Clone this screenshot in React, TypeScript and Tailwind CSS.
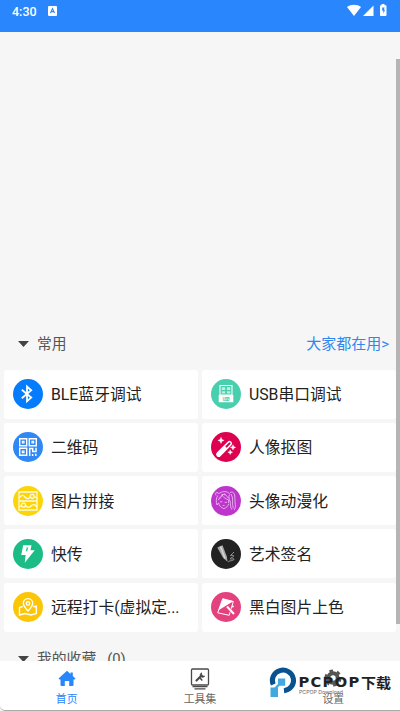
import React from 'react';

interface Tool {
  name: string;
  color: string;
  icon: React.ReactNode;
}

const stroke = { fill: 'none', stroke: 'white', strokeWidth: 1.2 };

const BluetoothIcon = () => (
  <svg viewBox="0 0 30 30" className="size-[30px]" {...stroke} strokeWidth={1.8}>
    <path d="M8.8 10.700 18.200 18.600 14 22.200V7.500l4.200 3.700L8.800 19.300" />
  </svg>
);

const UsbIcon = () => (
  <svg viewBox="0 0 30 30" className="size-[30px]">
    <path d="M9 6.500h12v9.500H9z" {...stroke} strokeWidth={1.1} />
    <path d="M10.800 8.300h3.400v2.700h-3.400zM15.900 8.300h3.400v2.700h-3.400zM10.800 12.300h3.400v2.200h-3.400zM15.900 12.300h3.400v2.200h-3.400z" fill="white" opacity=".65" />
    <path d="M7.700 16h14.600v7.300H7.700z" fill="white" />
    <text x="11.500" y="21.600" fontSize="4.500" fontWeight="700" fill="#48cfad" textLength="7" className="font-['Roboto',sans-serif]">USB</text>
  </svg>
);

const QrIcon = () => (
  <svg viewBox="0 0 30 30" className="size-[30px]" {...stroke} strokeWidth={1.4}>
    <path d="M6.700 6.700h7v7h-7zM16.300 6.700h7v7h-7zM6.700 16.300h7v7h-7z" />
    <path d="M9.400 9.400h1.600v1.600H9.400zM19 9.400h1.600v1.600H19zM9.400 19h1.600v1.600H9.400z" strokeWidth={1.2} />
    <path d="M16.700 24v-7.400h3v3h3.300v-3.800M19.600 22v2M22.800 21.800V24" strokeWidth={1.5} />
  </svg>
);

const WandIcon = () => (
  <svg viewBox="0 0 30 30" className="size-[30px]">
    <path d="M7.700 22.300 18.500 11.500" stroke="white" strokeWidth="5.200" strokeLinecap="round" />
    <path d="M15.500 14.500 18.600 11.400" stroke="#de0050" strokeWidth="2" strokeLinecap="round" />
    <path d="m10 5.300.9 2.200 2.200.9-2.200.9-.9 2.200-.9-2.200-2.200-.9 2.200-.9zM22 12.700l.8 1.900 1.900.8-1.900.8-.8 1.900-.8-1.900-1.900-.8 1.900-.8zM19.200 17.800l.7 1.700 1.700.7-1.700.7-.7 1.700-.7-1.700-1.700-.7 1.700-.7z" fill="white" stroke="white" strokeWidth=".4" />
  </svg>
);

const CollageIcon = () => (
  <svg viewBox="0 0 30 30" className="size-[30px]" {...stroke} stroke="#fffbe0" strokeWidth={1.3}>
    <path d="M6 6h18v18H6zM6 15h18" />
    <path d="M6 12.200c2.500-3.500 4-3.700 6-1.200s3.500 2 5.200-.1M24 21.200c-2-3.200-4-3.300-6-1.200s-4 1.500-5.300-.7" />
    <circle cx="19.200" cy="10.300" r="2" />
    <circle cx="10.500" cy="19.200" r="2" />
    <path d="M21.200 10.500 24 12M8.500 19.500 6 21" />
  </svg>
);

const AnimeIcon = () => (
  <svg viewBox="0 0 30 30" className="size-[30px]" {...stroke} stroke="#f0c8f5" strokeWidth={0.8}>
    <path d="M5 9.500c-.7-1.200-.3-2.700.8-3.500.5 1.400 1.700 1.700 3.200 1 2.800-2 6.800-2 9.300.5" />
    <path d="M6.800 9.500c-2 3-1.800 6.500-.8 9.500l1.500-2.200c.5 2.500 2.200 4.700 5.300 5.800 2.500-.8 4.200-2.300 4.900-4.800" />
    <path d="M7 14c2.200-1.500 3.300-2.800 4-5.500 1 2.800 3 4 6.700 5.500l-.2 3M11 8.500c2.500-.5 5.200 1 6.500 3.800" />
    <path d="M18.300 7.500c1.800-2.500 4.700-1.500 5.300 1.500.6 4 .1 6 .8 9.500.2 2-.3 4-1.200 5.500" />
    <path d="M18.500 8.500c-1.300 2.500-.2 4.500.5 6.500.6 2.500.2 6 1.700 8.500M20 8c2.700 4 .8 8 2.200 14.500" />
    <path d="M9 15.800h2.300M13.700 16.300H16M11.800 19.500h1.700M9.700 10.500 8 12.700M13 7.200l1.500 1.700" />
  </svg>
);

const BoltIcon = () => (
  <svg viewBox="0 0 30 30" className="size-[30px]">
    <path d="M10.200 6.300h8.300l-1 5h4.200L11.800 23.800l.8-7.800H8.200z" fill="white" />
    <path d="m13.900 8-1.100 4.300h1.300l.9-3.300z" fill="#1bbc86" />
  </svg>
);

const MapPinIcon = () => (
  <svg viewBox="0 0 30 30" className="size-[30px]" {...stroke} strokeWidth={1.4}>
    <path d="M15 19c-3.200-3.400-4.700-5.600-4.700-7.700a4.700 4.700 0 0 1 9.400 0C19.700 13.400 18.200 15.600 15 19z" />
    <circle cx="15" cy="11.400" r="1.700" />
    <path d="M9.700 14.500 6.500 15.500V23l5.500-1.500L18 23l5.300-1.500v-7.300l-3 .5" />
  </svg>
);

const PencilIcon = () => (
  <svg viewBox="0 0 30 30" className="size-[30px]">
    <path d="m6.300 8.500 5.200-2.300L15.800 17.500l.8 5.200-4.400-3.700z" fill="#a8a8a8" />
    <path d="m9.500 7.500 4.500 12" stroke="#d5d5d5" strokeWidth="1.500" />
    <path d="M23 13c-1.500 1-2 2.500-3.500 3.500 2-.2 3.300-.5 3 .8-.5 1.500-3 .9-3.300 2.500 1.500.8 3-.8 4 .5-1.700 1.800-4 1-6 2.500" fill="none" stroke="#999" strokeWidth="1" />
  </svg>
);

const PaintIcon = () => (
  <svg viewBox="0 0 30 30" className="size-[30px]">
    <path d="M11.700 6.800 22.300 9.500 18.200 23.300 6.700 20.800z" fill="none" stroke="white" strokeWidth="1" />
    <path d="M12 6.500 22.300 9.300 7.500 18.300z" fill="white" />
    <path d="m14.600 14.800 3.500-2.400 1.400 3.300 3.600 4.700-1.900 1.600-4.500-4.300z" fill="#e4417f" />
    <path d="m16 14.500 7 7.500" stroke="white" strokeWidth="2" />
    <circle cx="21.800" cy="14.500" r="1" fill="white" />
  </svg>
);

const tools: Tool[] = [
  { name: 'BLE蓝牙调试', color: 'bg-[#047cfb]', icon: <BluetoothIcon /> },
  { name: 'USB串口调试', color: 'bg-[#48cfad]', icon: <UsbIcon /> },
  { name: '二维码', color: 'bg-[#3088f5]', icon: <QrIcon /> },
  { name: '人像抠图', color: 'bg-[#de0050]', icon: <WandIcon /> },
  { name: '图片拼接', color: 'bg-[#fbd50a]', icon: <CollageIcon /> },
  { name: '头像动漫化', color: 'bg-[#bd35cb]', icon: <AnimeIcon /> },
  { name: '快传', color: 'bg-[#1bbc86]', icon: <BoltIcon /> },
  { name: '艺术签名', color: 'bg-[#222222]', icon: <PencilIcon /> },
  { name: '远程打卡(虚拟定...', color: 'bg-[#fcc505]', icon: <MapPinIcon /> },
  { name: '黑白图片上色', color: 'bg-[#e4417f]', icon: <PaintIcon /> },
];

const StatusBar: React.FC = () => (
  <header className="flex h-8 shrink-0 items-start bg-[#2a86fd] pl-[12px] pr-[13px] text-white">
    <span className="mt-[4px] text-[12.500px] leading-4 font-medium font-['Roboto',sans-serif]">4:30</span>
    <svg viewBox="0 0 9 10" className="ml-[11px] mt-[6px] h-[10px] w-[9px]">
      <rect width="9" height="10" rx="1" fill="white" />
      <path d="M2.500 7 4.500 2.500 6.500 7M3 5.600h3" fill="none" stroke="#2a86fd" strokeWidth="1.100" />
    </svg>
    <svg viewBox="0 0 40 12" className="ml-auto mt-[4px] h-3 w-10" fill="white">
      <path d="M0 3C4 .1 10 .1 14 3L7 12z" />
      <path d="M26.500 1.500V12H16z" />
      <path d="M34.500 1.200V0h3v1.200h1.300q.7 0 .7.800v9q0 1-.7 1h-5.100q-.7 0-.7-1V2q0-.8.7-.8z" />
      <path d="M37.500 3.500h-2.300v3.200h1.200v3.100l1.600-4h-1z" fill="#2a86fd" />
    </svg>
  </header>
);

const ToolCard: React.FC<{ tool: Tool }> = ({ tool }) => (
  <div className="flex h-[49px] min-w-0 items-center rounded-[3px] bg-white pl-[9px] pr-2">
    <div className={`size-[30px] shrink-0 overflow-hidden rounded-full ${tool.color}`}>{tool.icon}</div>
    <span className="ml-2 pt-[2px] text-[15.800px] leading-6 whitespace-nowrap text-[#222]">{tool.name}</span>
  </div>
);

const Caret = () => (
  <svg viewBox="0 0 11 6" className="h-[6px] w-[11px]">
    <path d="M0 0h11L5.500 6z" fill="#444" />
  </svg>
);

const Watermark: React.FC = () => (
  <svg viewBox="0 0 130 36" className="absolute left-[266px] top-[4px] h-9 w-[130px]">
    <path d="M7.200 19.500a10.600 10.300 0 1 1 10.800 6.200" fill="none" stroke="#07528f" strokeWidth="5" />
    <path d="M12 13.500h7.200v7.200H12zM4.500 22.500h7.500v9.500H4.500z" fill="#41a9df" />
    <path d="m12.500 20-4.500 5" stroke="#41a9df" strokeWidth="2.500" />
    <g fill="#222">
      <text x="32.500" y="22.200" fontSize="13.500" fontWeight="700" letterSpacing="1.200" textLength="62" lengthAdjust="spacingAndGlyphs" className="font-['DejaVu_Sans',sans-serif]">PCPOP</text>
      <text x="95" y="22.800" fontSize="13.500" fontWeight="700" textLength="30" lengthAdjust="spacingAndGlyphs" className="font-['Noto_Sans_CJK_SC',sans-serif]">下载</text>
    </g>
    <text x="33" y="28.800" fontSize="4.800" fill="#666" textLength="44" lengthAdjust="spacingAndGlyphs" className="font-['Inter',sans-serif]">PCPOP Download</text>
  </svg>
);

const BottomNav: React.FC = () => (
  <nav className="relative grid h-[50px] shrink-0 grid-cols-3 rounded-bl-[5px] border-b border-[#aaa] bg-white text-[10.800px] leading-[14px] text-[#666]">
    <div className="flex flex-col items-center text-[#2a86fd]">
      <svg viewBox="0 0 18 17" className="mt-[9px] h-[17px] w-[18px]" fill="currentColor">
        <path d="m9 .8 3.500 3.100V2.600h2.300v3.300L17.500 8.500 16.500 9.500h-1v5.500q0 1-1 1h-3.300v-5H6.800v5H3.500q-1 0-1-1V9.500h-1L.5 8.500z" />
      </svg>
      <span className="mt-[6px]">首页</span>
    </div>
    <div className="flex flex-col items-center">
      <svg viewBox="0 0 20 22" className="mt-[7px] h-[22px] w-5" fill="none" stroke="#4a4a4a">
        <rect x="1.500" y="1" width="17" height="16" rx="1" strokeWidth="1.300" />
        <path d="M2.500 18.700h15M4.500 20.800h11" strokeWidth="1.300" />
        <path d="m6.500 12.500 5-5" strokeWidth="2.200" strokeLinecap="round" />
        <path d="M11.500 4.800c-1.500 1-1.600 2.600-.5 3.800 1.200 1.200 2.900.8 3.700-.6l-1.900.1-1.200-1.300z" strokeWidth=".8" fill="#4a4a4a" />
        <path d="m9.500 9.500 2.800 3" strokeWidth="1.500" />
      </svg>
      <span className="mt-[3px]">工具集</span>
    </div>
    <div className="flex flex-col items-center">
      <svg viewBox="0 0 18 18" className="mt-[8px] size-[18px]" fill="none" stroke="#555">
        <circle cx="9" cy="9" r="4.700" strokeWidth="4" />
        <circle cx="9" cy="9" r="7.400" strokeWidth="2.400" strokeDasharray="3.700 4.050" />
      </svg>
      <span className="mt-[6px]">设置</span>
    </div>
    <Watermark />
  </nav>
);

export default function App() {
  return (
    <div className="flex h-[711px] w-[400px] flex-col overflow-hidden bg-[#f6f6f6] font-['Roboto','Noto_Sans_CJK_SC',sans-serif]">
      <StatusBar />
      <div className="flex min-h-0 flex-1">
        <main className="flex w-[396px] shrink-0 flex-col overflow-hidden pl-1 pt-[300px]">
          <div className="flex h-6 shrink-0 items-center pl-[14px] pr-[7px] text-[14.800px]">
            <Caret />
            <span className="ml-2 text-[#555]">常用</span>
            <span className="ml-auto text-[15px] text-[#2f87ee]">大家都在用&gt;</span>
          </div>
          <div className="mt-[13.500px] grid shrink-0 grid-cols-2 gap-x-1 gap-y-[4.300px]">
            {tools.map((tool) => (
              <ToolCard key={tool.name} tool={tool} />
            ))}
          </div>
          <div className="mt-[15px] flex h-6 shrink-0 items-center pl-[14px] text-[14.800px] text-[#555]">
            <Caret />
            <span className="ml-2">我的收藏</span>
            <span className="ml-[11px]">(0)</span>
          </div>
        </main>
        {/* scrollbar */}
        <div className="w-1 pt-[27px]">
          <div className="h-[565px] bg-[#b5b5b5]" />
        </div>
      </div>
      <BottomNav />
    </div>
  );
}
